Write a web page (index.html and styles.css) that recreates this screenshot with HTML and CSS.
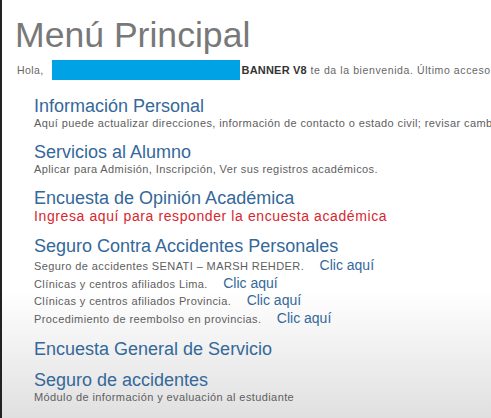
FILE: index.html
```html
<!DOCTYPE html>
<html lang="es">
<head>
<meta charset="utf-8">
<title>Menú Principal</title>
<link rel="stylesheet" href="styles.css">
</head>
<body>
<div class="page">
  <h1 class="title">Menú Principal</h1>
  <div class="welcome">
    <span class="hola">Hola,</span>
    <span class="redact"></span>
    <span class="greet"><b>BANNER V8</b> te da la bienvenida. Último acceso el martes</span>
  </div>
  <ul class="menu">
    <li class="item">
      <a class="head" href="#">Información Personal</a>
      <div class="desc">Aquí puede actualizar direcciones, información de contacto o estado civil; revisar cambios</div>
    </li>
    <li class="item">
      <a class="head" href="#">Servicios al Alumno</a>
      <div class="desc">Aplicar para Admisión, Inscripción, Ver sus registros académicos.</div>
    </li>
    <li class="item">
      <a class="head" href="#">Encuesta de Opinión Académica</a>
      <div class="desc red">Ingresa aquí para responder la encuesta académica</div>
    </li>
    <li class="item">
      <a class="head" href="#">Seguro Contra Accidentes Personales</a>
      <div class="lines">
        <div class="line">Seguro de accidentes SENATI – MARSH REHDER. <a class="clic" href="#">Clic aquí</a></div>
        <div class="line">Clínicas y centros afiliados Lima. <a class="clic" href="#">Clic aquí</a></div>
        <div class="line">Clínicas y centros afiliados Provincia. <a class="clic" href="#">Clic aquí</a></div>
        <div class="line">Procedimiento de reembolso en provincias. <a class="clic" href="#">Clic aquí</a></div>
      </div>
    </li>
    <li class="item">
      <a class="head" href="#">Encuesta General de Servicio</a>
    </li>
    <li class="item">
      <a class="head" href="#">Seguro de accidentes</a>
      <div class="desc">Módulo de información y evaluación al estudiante</div>
    </li>
  </ul>
</div>
</body>
</html>
```

FILE: styles.css
```css
html, body {
  margin: 0;
  padding: 0;
}

body {
  font-family: "Liberation Sans", Arial, sans-serif;
  background: #fff;
}

.page {
  width: 491px;
  height: 418px;
  box-sizing: border-box;
  overflow: hidden;
  border-left: 2px solid #222;
  background: linear-gradient(to bottom, #ffffff 0px, #ffffff 290px, #e0e0e0 418px);
  white-space: nowrap;
}

.title {
  margin: 18px 0 0 13px;
  font-size: 35.6px;
  line-height: 35px;
  font-weight: normal;
  color: #787878;
}

.welcome {
  display: flex;
  align-items: center;
  margin: 7px 0 0 15px;
  height: 20px;
  font-size: 10.5px;
  letter-spacing: 0.6px;
  color: #666;
}

.hola,
.greet {
  flex-shrink: 0;
}

.hola {
  letter-spacing: 0.4px;
}

.redact {
  display: block;
  flex-shrink: 0;
  width: 188px;
  height: 20px;
  margin-left: 8px;
  margin-right: 2px;
  background: #00a2e6;
}

.greet b {
  font-size: 11px;
  letter-spacing: 0.2px;
  color: #333;
}

.menu {
  list-style: none;
  margin: 17px 0 0 0;
  padding: 0 0 0 32px;
}

.item {
  margin-bottom: 12px;
}

.head {
  display: block;
  font-size: 18px;
  line-height: 19px;
  color: #34689a;
  text-decoration: none;
}

.desc {
  font-size: 11px;
  letter-spacing: 0.4px;
  line-height: 15px;
  color: #5e5e5e;
}

.desc.red {
  font-size: 14px;
  letter-spacing: 0.6px;
  line-height: 17px;
  color: #d7262e;
}

.lines {
  padding-top: 1px;
}

.line {
  font-size: 11px;
  letter-spacing: 0.4px;
  line-height: 16.7px;
  color: #5e5e5e;
}

.clic {
  margin-left: 12px;
  font-size: 14px;
  letter-spacing: 0;
  color: #34689a;
  text-decoration: none;
}
```
